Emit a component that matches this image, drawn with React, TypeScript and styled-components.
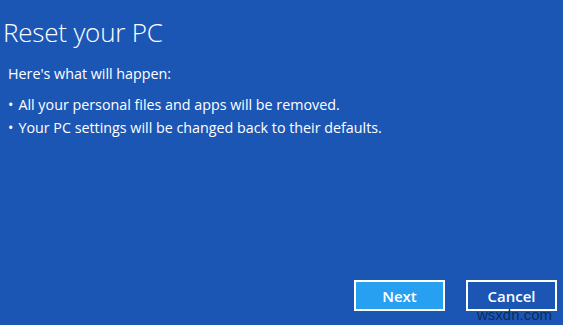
import React from "react";
import styled, { createGlobalStyle } from "styled-components";

const GlobalStyle = createGlobalStyle`
  html, body {
    margin: 0;
    padding: 0;
    background: #1c56b5;
  }
`;

const Screen = styled.div`
  position: relative;
  width: 563px;
  height: 325px;
  background: #1c56b5;
  color: #ffffff;
  font-family: "Open Sans", "Liberation Sans", sans-serif;
  display: flex;
  flex-direction: column;
  overflow: hidden;
`;

const Title = styled.h1`
  margin: 14px 0 0 3px;
  font-size: 26px;
  font-weight: 300;
  line-height: 36px;
  letter-spacing: -0.2px;
`;

const Intro = styled.p`
  margin: 14px 0 0 8px;
  font-size: 14.3px;
  line-height: 20px;
`;

const List = styled.ul`
  list-style: none;
  margin: 9px 0 0 8px;
  padding: 0;
  font-size: 14.3px;
  line-height: 23px;
`;

const Item = styled.li`
  &::before {
    content: "•";
    margin-right: 5px;
  }
`;

const Actions = styled.div`
  margin-top: auto;
  display: flex;
  justify-content: flex-end;
  gap: 21px;
  padding: 0 6px 14px 0;
`;

const ActionButton = styled.button<{ $primary?: boolean }>`
  width: 91px;
  height: 31px;
  box-sizing: border-box;
  border: 2px solid #ffffff;
  background: ${(p) => (p.$primary ? "#28a0f2" : "transparent")};
  color: #ffffff;
  font-family: "Open Sans", "Liberation Sans", sans-serif;
  font-size: 15px;
  font-weight: 600;
  padding: 0;
`;

const Watermark = styled.span`
  position: absolute;
  right: 11px;
  bottom: 3px;
  font-family: "Liberation Sans", sans-serif;
  font-size: 15px;
  line-height: 15px;
  color: #0d2a5c;
`;

export default function App() {
  return (
    <>
      <GlobalStyle />
      <Screen>
        <Title>Reset your PC</Title>
        <Intro>Here's what will happen:</Intro>
        <List>
          <Item>All your personal files and apps will be removed.</Item>
          <Item>Your PC settings will be changed back to their defaults.</Item>
        </List>
        <Actions>
          <ActionButton $primary>Next</ActionButton>
          <ActionButton>Cancel</ActionButton>
        </Actions>
        <Watermark>wsxdn.com</Watermark>
      </Screen>
    </>
  );
}
